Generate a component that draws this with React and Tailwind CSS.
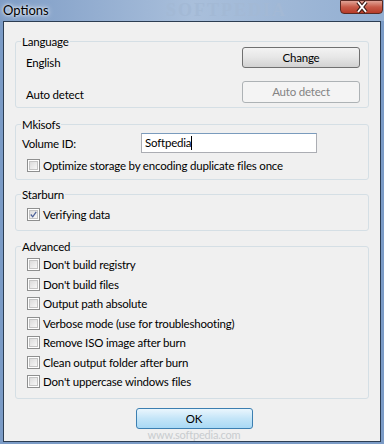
import React from 'react';

const font = { fontFamily: 'Lato, "Noto Sans", sans-serif' };

function CheckBox({ checked }) {
  return (
    <span className="w-[13px] h-[13px] shrink-0 border border-[#8e8f8f] bg-white p-[1px]">
      <span className="flex w-full h-full border border-[#c4c4c4] bg-gradient-to-br from-[#dcdcdc] to-[#f7f7f7] items-center justify-center">
        {checked && (
          <svg width="9" height="9" viewBox="0 0 9 9">
            <path d="M1 4.5 L3.5 7.5 L8 1" fill="none" stroke="#4a5f97" strokeWidth="1.6" />
          </svg>
        )}
      </span>
    </span>
  );
}

function Check({ label, checked }) {
  return (
    <div className="h-[19.5px] flex items-center gap-[3px] pl-[11px]">
      <CheckBox checked={checked} />
      <span>{label}</span>
    </div>
  );
}

function Group({ title, className, children }) {
  return (
    <div className={'mx-[11px] border border-[#d5dfe5] rounded-[3px] ' + className}>
      <div className="-mt-[8px] ml-[5px] px-[1px] w-fit h-[15px] leading-[15px] bg-[#f0f0f0]">{title}</div>
      {children}
    </div>
  );
}

const advanced = [
  "Don't build registry",
  "Don't build files",
  'Output path absolute',
  'Verbose mode (use for troubleshooting)',
  'Remove ISO image after burn',
  'Clean output folder after burn',
  "Don't uppercase windows files",
];

export default function App() {
  return (
    <div
      className="w-[384px] h-[444px] flex flex-col bg-[#7b9bc6] text-[11.5px] tracking-[-0.2px] text-black overflow-hidden"
      style={font}
    >
      {/* title bar */}
      <div className="h-[21px] flex bg-gradient-to-r from-[#7f9dc6] via-[#a9bfdb] to-[#93afd2]">
        <div className="w-[50px] shrink-0 pl-[3px] pt-[1px] leading-[18px] text-[13px] tracking-normal [text-shadow:0_0_6px_#fff,0_0_3px_#fff]">Options</div>
        <div className="ml-[116px] shrink-0 text-[18px] leading-[20px] font-bold tracking-[2px] text-[#a3b9d5] whitespace-nowrap" style={{ fontFamily: '"Liberation Serif", serif' }}>
          SOFTPEDIA
        </div>
        <div className="flex-1" />
        <div className="w-[43px] h-[14px] shrink-0 mr-[1px] rounded-b-[4px] border border-[#5a2a24] bg-gradient-to-b from-[#e0a295] via-[#c75a48] to-[#b73b28] flex items-start justify-center">
          <svg width="14" height="12" viewBox="0 0 14 12">
            <path d="M3 1 L11 11 M11 1 L3 11" stroke="#3a1a14" strokeWidth="4" />
            <path d="M3 1 L11 11 M11 1 L3 11" stroke="#fff" strokeWidth="2" />
          </svg>
        </div>
      </div>

      {/* client area */}
      <div className="flex-1 mx-[3px] mb-[2px] border border-[#2c3d52] bg-[#f0f0f0] flex flex-col">
        <Group title="Language" className="mt-[19px] h-[67px]">
          <div className="-mt-[2px] flex justify-between pl-[10px] pr-[8px]">
            <span className="pt-[8px] leading-[15px]">English</span>
            <button className="w-[118px] h-[21px] rounded-[3px] border border-[#707070] bg-gradient-to-b from-[#f3f3f3] via-[#e6e6e6] to-[#d2d2d2] leading-[18px]">
              Change
            </button>
          </div>
          <div className="mt-[11px] flex justify-between pl-[10px] pr-[8px]">
            <span className="pt-[6px] leading-[15px]">Auto detect</span>
            <button className="w-[118px] h-[22px] rounded-[3px] border border-[#adb2b5] bg-[#f4f4f4] text-[#838383] leading-[18px]">
              Auto detect
            </button>
          </div>
        </Group>

        <Group title="Mkisofs" className="mt-[16px] h-[56px]">
          <div className="mt-[1px] h-[20px] flex items-center">
            <span className="pl-[6px] w-[125px] pt-[2px]">Volume ID:</span>
            <div className="w-[176px] h-[20px] border border-[#abadb3] border-t-[#7a9bbd] bg-white flex items-center pl-[3px]">
              <span>Softpedia</span>
              <span className="w-[1px] h-[14px] bg-black" />
            </div>
          </div>
          <div className="mt-[3px]">
            <Check label="Optimize storage by encoding duplicate files once" />
          </div>
        </Group>

        <Group title="Starburn" className="mt-[14px] h-[37px]">
          <div className="mt-[3px]">
            <Check label="Verifying data" checked />
          </div>
        </Group>

        <Group title="Advanced" className="mt-[15px] h-[153px]">
          <div className="mt-[1px]">
            {advanced.map((a) => (
              <Check key={a} label={a} />
            ))}
          </div>
        </Group>

        <div className="flex justify-center pl-[4px] mt-[9px]">
          <button className="w-[117px] h-[21px] rounded-[3px] border border-[#3c7fb1] bg-gradient-to-b from-[#eaf6fd] via-[#c4e5f8] to-[#a9d9f5] leading-[18px]">
            OK
          </button>
        </div>
        <div className="text-center text-[11px] leading-[12px] text-[#c8cccf] pl-[4px]">www.softpedia.com</div>
      </div>
    </div>
  );
}
